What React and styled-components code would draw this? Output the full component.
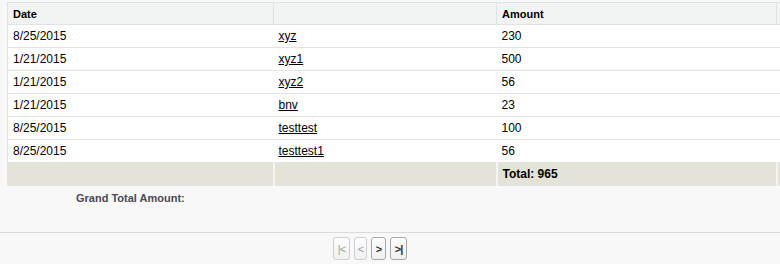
import styled, { createGlobalStyle } from "styled-components";

const GlobalStyle = createGlobalStyle`
  html, body {
    margin: 0;
    padding: 0;
    background: #f8f8f8;
    overflow: hidden;
  }
  body {
    font-family: "Liberation Sans", Arial, sans-serif;
    color: #000;
  }
`;

const Page = styled.div`
  width: 780px;
  height: 264px;
  overflow: hidden;
  display: flex;
  flex-direction: column;
`;

const Block = styled.div`
  padding: 2px 0 0 7px;
`;

const Table = styled.table`
  border-collapse: collapse;
  width: 800px;
  table-layout: fixed;
  background: #fff;
  border: 1px solid #e0e3e5;
  font-size: 12px;
`;

const HeadCell = styled.th`
  background: #f2f3f3;
  border: 1px solid #e0e3e5;
  border-top: none;
  text-align: left;
  font-size: 11px;
  font-weight: bold;
  color: #000;
  height: 21px;
  padding: 0 5px;
`;

const Cell = styled.td`
  border-bottom: 1px solid #e3e3e3;
  height: 22px;
  padding: 0 5px;
  color: #000;
  white-space: nowrap;
`;

const Link = styled.a`
  color: #000;
  text-decoration: underline;
`;

const FootCell = styled.td`
  background: #e3e3d7;
  border-right: 2px solid #f4f4f0;
  height: 22px;
  padding: 0 5px;
  font-weight: bold;
  color: #000;
`;

const GrandTotal = styled.div`
  padding: 6px 0 0 76px;
  height: 40px;
  font-size: 11px;
  font-weight: bold;
  color: #4a4a56;
`;

const Divider = styled.div`
  border-top: 1px solid #dbdbdb;
`;

const Pager = styled.div`
  display: flex;
  justify-content: center;
  gap: 4px;
  padding: 4px 40px 0 0;
`;

const PageButton = styled.span`
  box-sizing: border-box;
  height: 23px;
  width: ${(p) => p.$w}px;
  border: 1px solid ${(p) => (p.$off ? "#cfcfcf" : "#a8a8a8")};
  border-radius: 3px;
  background: linear-gradient(#fdfdfd, #f0f0f0);
  display: flex;
  align-items: center;
  justify-content: center;
  font-size: 11px;
  font-weight: ${(p) => (p.$off ? "normal" : "bold")};
  color: ${(p) => (p.$off ? "#9a9ca8" : "#333")};
  letter-spacing: -1px;
`;

const rows = [
  ["8/25/2015", "xyz", "230"],
  ["1/21/2015", "xyz1", "500"],
  ["1/21/2015", "xyz2", "56"],
  ["1/21/2015", "bnv", "23"],
  ["8/25/2015", "testtest", "100"],
  ["8/25/2015", "testtest1", "56"],
];

export default function App() {
  return (
    <Page>
      <GlobalStyle />
      <Block>
        <Table>
          <colgroup>
            <col style={{ width: 266 }} />
            <col style={{ width: 223 }} />
            <col style={{ width: 280 }} />
            <col />
          </colgroup>
          <thead>
            <tr>
              <HeadCell>Date</HeadCell>
              <HeadCell></HeadCell>
              <HeadCell>Amount</HeadCell>
              <HeadCell></HeadCell>
            </tr>
          </thead>
          <tbody>
            {rows.map((r, i) => (
              <tr key={i}>
                <Cell>{r[0]}</Cell>
                <Cell>
                  <Link>{r[1]}</Link>
                </Cell>
                <Cell>{r[2]}</Cell>
                <Cell></Cell>
              </tr>
            ))}
          </tbody>
          <tfoot>
            <tr>
              <FootCell></FootCell>
              <FootCell></FootCell>
              <FootCell>Total: 965</FootCell>
              <FootCell></FootCell>
            </tr>
          </tfoot>
        </Table>
      </Block>
      <GrandTotal>Grand Total Amount:</GrandTotal>
      <Divider />
      <Pager>
        <PageButton $off $w={17}>|&lt;</PageButton>
        <PageButton $off $w={13}>&lt;</PageButton>
        <PageButton $w={15}>&gt;</PageButton>
        <PageButton $w={17}>&gt;|</PageButton>
      </Pager>
    </Page>
  );
}
